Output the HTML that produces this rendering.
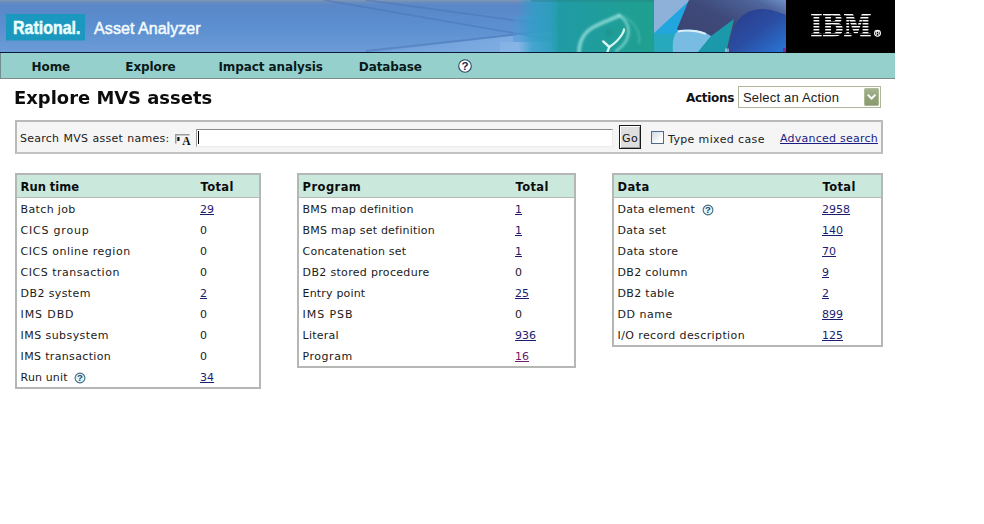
<!DOCTYPE html>
<html>
<head>
<meta charset="utf-8">
<title>Rational Asset Analyzer - Explore MVS assets</title>
<style>
html,body{margin:0;padding:0;background:#fff;}
body{width:984px;height:524px;position:relative;overflow:hidden;font-family:"DejaVu Sans","Liberation Sans",sans-serif;font-size:11px;color:#111;}
#page{position:absolute;left:0;top:0;width:895px;height:524px;}
#banner{position:absolute;left:0;top:0;width:895px;height:53px;display:block;}
#nav{position:absolute;left:0;top:53px;width:895px;height:26px;background:#96d0cc;border-bottom:1px solid #7f8a8a;border-left:1px solid #6f8f8c;box-sizing:border-box;}
#nav span{position:absolute;top:7px;font-weight:bold;font-size:12px;letter-spacing:-0.1px;color:#0a1a1a;white-space:nowrap;line-height:14px;}
h1{position:absolute;left:14px;top:87px;margin:0;font-size:17px;letter-spacing:0;transform-origin:0 0;transform:scaleX(1.055);font-weight:bold;line-height:22px;color:#0c0c0c;white-space:nowrap;}
#actlbl{position:absolute;left:686px;top:91px;font-weight:bold;font-size:12px;letter-spacing:-0.3px;line-height:14px;color:#111;}
#sel{position:absolute;left:738px;top:86px;width:141px;height:20px;border:1px solid #adb79b;background:#fff;}
#sel .t{position:absolute;left:4px;top:3px;font-family:"Liberation Sans",sans-serif;font-size:13px;letter-spacing:0.18px;line-height:16px;color:#222;white-space:nowrap;}
#sel .b{position:absolute;left:125px;top:1px;width:15px;height:18px;}
#search{position:absolute;left:15px;top:120px;width:864px;height:30px;border:2px solid #b9b9b9;border-bottom-color:#c2c2c2;background:#f5f5f5;}
#search .lbl{position:absolute;left:3px;top:10px;line-height:14px;letter-spacing:0.26px;word-spacing:0.4px;white-space:nowrap;color:#222;}
#inp{position:absolute;left:179px;top:7px;width:415px;height:16px;background:#fff;border:1px solid #ececec;border-top:1px solid #8a8a8a;border-left:1px solid #9a9a9a;}
#go{position:absolute;left:602px;top:3px;width:20px;height:22px;border:1px solid #1a1a1a;background:#dedede;box-shadow:inset 1px 1px 0 #fff, inset -1px -1px 0 #9a9a9a;}
#go span{position:absolute;left:2px;top:6px;line-height:14px;font-size:11px;letter-spacing:0.6px;color:#111;}
#cb{position:absolute;left:634px;top:9px;width:11px;height:11px;border:1px solid #4d6a8c;background:linear-gradient(135deg,#cfd8e2,#ffffff 75%);}
#tmc{position:absolute;left:651px;top:11px;line-height:14px;letter-spacing:0.37px;white-space:nowrap;color:#222;}
#adv{position:absolute;left:763px;top:10px;line-height:14px;letter-spacing:0.24px;white-space:nowrap;color:#1c1c84;text-decoration:underline;}
.tb{position:absolute;top:173px;border:2px solid #b4b7b4;background:#fff;}
.tb .hd{height:22px;background:#cbe8dd;border-bottom:1px solid #b4b7b4;position:relative;font-weight:bold;font-size:11.5px;}
.tb .r{height:21px;position:relative;}
.tb .hd span,.tb .r span{position:absolute;white-space:nowrap;line-height:14px;}
.tb .hd span{top:5.4px;color:#0c0c0c;}
.tb .r span{top:5px;color:#1a1a1a;}
.tb span.a{left:3.6px;}
.tb .r span.lk{color:#1c1c70;text-decoration:underline;}
.tb .r span.vs{color:#6a206a;text-decoration:underline;}
.tb .hd span.tt{letter-spacing:0.35px;}
.q{position:absolute;top:5.6px;}
</style>
</head>
<body>
<div id="page">
<svg id="banner" width="895" height="53" viewBox="0 0 895 53">
  <defs>
    <linearGradient id="bg" x1="0" y1="0" x2="0" y2="1">
      <stop offset="0" stop-color="#8196b4"/>
      <stop offset="0.045" stop-color="#688bbf"/>
      <stop offset="0.1" stop-color="#5a87c8"/>
      <stop offset="0.5" stop-color="#5b8fd0"/>
      <stop offset="1" stop-color="#6d9cd7"/>
    </linearGradient>
    <linearGradient id="fade" gradientUnits="userSpaceOnUse" x1="366" y1="0" x2="560" y2="0">
      <stop offset="0" stop-color="#8cb8ea" stop-opacity="0.15"/>
      <stop offset="1" stop-color="#8cb8ea" stop-opacity="0.75"/>
    </linearGradient>
    <linearGradient id="tl0" x1="0" y1="0" x2="1" y2="0">
      <stop offset="0" stop-color="#2f9fc8" stop-opacity="0"/>
      <stop offset="0.35" stop-color="#2f9fc6" stop-opacity="0.75"/>
      <stop offset="0.8" stop-color="#2a9fbc" stop-opacity="0.9"/>
      <stop offset="1" stop-color="#239da8"/>
    </linearGradient>
    <linearGradient id="tl" x1="0" y1="0" x2="1" y2="0">
      <stop offset="0" stop-color="#209ba6"/>
      <stop offset="1" stop-color="#1fa08f"/>
    </linearGradient>
    <linearGradient id="cy" x1="0" y1="0" x2="0" y2="1">
      <stop offset="0" stop-color="#20a4e4"/>
      <stop offset="0.6" stop-color="#22a6dc"/>
      <stop offset="1" stop-color="#27a9bc"/>
    </linearGradient>
    <linearGradient id="nv" x1="0" y1="1" x2="1" y2="0">
      <stop offset="0" stop-color="#3a426e"/>
      <stop offset="0.55" stop-color="#3e4a7a"/>
      <stop offset="0.85" stop-color="#4e659c"/>
      <stop offset="1" stop-color="#6e90c8"/>
    </linearGradient>
    <linearGradient id="arc" x1="0" y1="0" x2="1" y2="1">
      <stop offset="0" stop-color="#2b3a88"/>
      <stop offset="0.5" stop-color="#2c4ea4"/>
      <stop offset="1" stop-color="#2a7cdc"/>
    </linearGradient>
  <filter id="bl" x="-10%" y="-10%" width="120%" height="120%"><feGaussianBlur stdDeviation="0.9"/></filter>
    <filter id="bl2" x="-10%" y="-10%" width="120%" height="120%"><feGaussianBlur stdDeviation="0.6"/></filter>
  </defs>
  <rect x="0" y="0" width="895" height="53" fill="url(#bg)"/>
  <path d="M366,53 L560,30 L560,53 Z" fill="url(#fade)"/>
  <g stroke="#4a74b6" stroke-width="1.8" fill="none" opacity="0.5">
    <path d="M324,0 L560,41"/>
    <path d="M366,0 L560,26.5"/>
    <path d="M366,51 L560,29.5"/>
  </g>
  <rect x="513" y="16" width="45" height="26" fill="#4a98d4" opacity="0.5"/>
  <rect x="500" y="42" width="58" height="10" fill="#9cc8ee" opacity="0.3"/>
  <rect x="518" y="0" width="40" height="53" fill="url(#tl0)"/>
  <rect x="558" y="0" width="96" height="53" fill="url(#tl)"/>
  <rect x="531" y="0" width="123" height="2" fill="#23787c" opacity="0.3"/>
  <g fill="none" stroke-linecap="round" filter="url(#bl)">
    <path d="M579,53 C579,42 584,33 592,28 C601,22.5 612,19.5 619,15.5" stroke="#b4f2ec" stroke-width="3.8" opacity="0.62"/>
    <path d="M619,15.5 C626,19 630,28 628,36 C626.5,42 622,47 616,51" stroke="#b4f2ec" stroke-width="2.6" opacity="0.55"/>
    <path d="M621,15 C633,20 641,31 639,43" stroke="#8fe2d8" stroke-width="1.8" opacity="0.32"/>
    <circle cx="609" cy="33" r="4" fill="#178a86" stroke="none" opacity="0.35"/>
  </g>
  <g fill="none" stroke-linecap="round" filter="url(#bl2)">
    <path d="M603.2,41.4 L609.3,47" stroke="#eafffc" stroke-width="2.4" opacity="0.92"/>
    <path d="M607,53 L609.3,47 C614,44 619,39.5 622.3,34 C623.5,32 624,30.5 624,29.3" stroke="#eafffc" stroke-width="2.3" opacity="0.88"/>
  </g>
  <g>
    <rect x="654" y="0" width="132" height="53" fill="#8db1d9"/>
    <path d="M690,0 L654,33 L654,53 L676,53 L678,28 Z" fill="url(#cy)"/>
    <path d="M654,34 L676,34 L676,53 L654,53 Z" fill="#28a9b8" opacity="0.75"/>
    <path d="M689,0 L786,0 L786,53 L700,53 L677,29 Q684,12 689,0 Z" fill="url(#nv)"/>
    <g filter="url(#bl2)">
    <path d="M729,54 C729,40 732,27 740,18 C747,11 756,8.5 764,9 C774,10 782,13 790,17 L790,54 Z" fill="url(#arc)"/>
    </g>
    <path d="M673,53 C672,40 674,32 680,30 C690,28 703,31 711,36 L728,53 Z" fill="#78bce4"/>
    <path d="M678,31.5 C686,29.8 696,30.5 706,33.8" stroke="#eef8fd" stroke-width="1.9" fill="none" opacity="0.85" filter="url(#bl2)"/>
    <path d="M697,53 L711,36 L734,19 L726,53 Z" fill="#1b98aa"/>
    <rect x="725" y="48.5" width="4" height="3.5" fill="#cfe8f6" opacity="0.55"/>
    <rect x="783" y="48" width="3" height="4" fill="#7a2a9a"/>
  </g>
  <rect x="786" y="0" width="109" height="53" fill="#000"/>
  <g>
    <text x="841" y="36.3" text-anchor="middle" font-family="'DejaVu Serif','Liberation Serif',serif" font-weight="bold" font-size="31" textLength="61" lengthAdjust="spacingAndGlyphs" fill="#fff" stroke="#fff" stroke-width="1.1" opacity="0.99">IBM</text>
    <g fill="#000">
      <rect x="805" y="15.5" width="72" height="1.5"/>
      <rect x="805" y="18.5" width="72" height="1.5"/>
      <rect x="805" y="21.5" width="72" height="1.5"/>
      <rect x="805" y="24.5" width="72" height="1.5"/>
      <rect x="805" y="27.5" width="72" height="1.5"/>
      <rect x="805" y="30.5" width="72" height="1.5"/>
      <rect x="805" y="33.5" width="72" height="1.5"/>
      <rect x="805" y="36.5" width="72" height="4"/>
      <rect x="805" y="8" width="72" height="6"/>
    </g>
    <circle cx="877.5" cy="33.3" r="2.9" fill="none" stroke="#fff" stroke-width="1.15"/>
    <text x="877.6" y="35.1" text-anchor="middle" font-family="'Liberation Sans',sans-serif" font-weight="bold" font-size="5" fill="#fff" opacity="0.99">R</text>
  </g>
  <rect x="0" y="52" width="786" height="1" fill="#0c1a34"/>
  <rect x="6" y="14" width="79" height="26.5" fill="#1a98c0"/>
  <text x="13.1" y="34" font-family="'Liberation Sans',sans-serif" font-weight="bold" font-size="18.2" textLength="67.4" lengthAdjust="spacingAndGlyphs" fill="#e8ffff" stroke="#e8ffff" stroke-width="0.5">Rational.</text>
  <text x="94.1" y="33.6" font-family="'Liberation Sans',sans-serif" font-size="17.2" textLength="106.5" lengthAdjust="spacingAndGlyphs" fill="#f4fbff" stroke="#f4fbff" stroke-width="0.5">Asset Analyzer</text>
</svg>
<div id="nav">
  <span style="left:30.6px">Home</span>
  <span style="left:124.3px">Explore</span>
  <span style="left:217.5px">Impact analysis</span>
  <span style="left:357.8px">Database</span>
  <svg style="position:absolute;left:456px;top:5px" width="16" height="16" viewBox="0 0 16 16"><circle cx="8" cy="8" r="6.3" fill="#fff" stroke="#2a4463" stroke-width="1.1"/><text x="8" y="12.1" text-anchor="middle" font-family="'Liberation Sans',sans-serif" font-weight="bold" font-size="11.5" fill="#1a2a4a">?</text></svg>
</div>
<h1>Explore MVS assets</h1>
<div id="actlbl">Actions</div>
<div id="sel"><span class="t">Select an Action</span>
  <svg class="b" viewBox="0 0 15 18"><defs><linearGradient id="sb" x1="0" y1="0" x2="0" y2="1"><stop offset="0" stop-color="#a6b38e"/><stop offset="0.5" stop-color="#93a379"/><stop offset="1" stop-color="#8a9b6f"/></linearGradient></defs><rect x="0" y="0" width="15" height="18" rx="1.5" fill="#b4c0a0"/><rect x="0.8" y="0.8" width="13.4" height="16.4" rx="1" fill="url(#sb)"/><path d="M3.8,6.6 L7.6,10.6 L11.4,6.6" fill="none" stroke="#fff" stroke-width="2.1"/></svg>
</div>
<div id="search">
  <span class="lbl">Search MVS asset names:</span>
  <svg style="position:absolute;left:158px;top:12px" width="17" height="13" viewBox="0 0 17 13"><path d="M0.75,9.5 L0.75,0.75 L14.5,0.75" fill="none" stroke="#9c9c9c" stroke-width="1.5"/><rect x="2.3" y="3" width="2.2" height="4" fill="#111"/><text x="11.3" y="10.5" text-anchor="middle" font-family="'Liberation Serif',serif" font-weight="bold" font-size="11.5" fill="#111">A</text></svg>
  <div id="inp"><div style="position:absolute;left:1px;top:1px;width:1px;height:13px;background:#000"></div></div>
  <div id="go"><span>Go</span></div>
  <div id="cb"></div>
  <span id="tmc">Type mixed case</span>
  <span id="adv">Advanced search</span>
</div>

<div class="tb" style="left:15px;width:242px;">
  <div class="hd"><span class="a" style="letter-spacing:0.0px">Run time</span><span class="tt" style="left:183.6px">Total</span></div>
  <div class="r"><span class="a" style="letter-spacing:0.353px">Batch job</span><span class="lk" style="left:183px">29</span></div>
  <div class="r"><span class="a" style="letter-spacing:0.781px">CICS group</span><span style="left:183px">0</span></div>
  <div class="r"><span class="a" style="letter-spacing:0.507px">CICS online region</span><span style="left:183px">0</span></div>
  <div class="r"><span class="a" style="letter-spacing:0.505px">CICS transaction</span><span style="left:183px">0</span></div>
  <div class="r"><span class="a" style="letter-spacing:0.394px">DB2 system</span><span class="lk" style="left:183px">2</span></div>
  <div class="r"><span class="a" style="letter-spacing:0.871px">IMS DBD</span><span style="left:183px">0</span></div>
  <div class="r"><span class="a" style="letter-spacing:0.431px">IMS subsystem</span><span style="left:183px">0</span></div>
  <div class="r"><span class="a" style="letter-spacing:0.346px">IMS transaction</span><span style="left:183px">0</span></div>
  <div class="r"><span class="a" style="letter-spacing:0.143px">Run unit</span><svg class="q" style="left:57.35px" width="12" height="12" viewBox="0 0 12 12"><circle cx="6" cy="6" r="4.9" fill="#e2f5fa" stroke="#44687a" stroke-width="1.1"/><text x="6" y="9.3" text-anchor="middle" font-family="'Liberation Sans',sans-serif" font-weight="bold" font-size="9.5" fill="#1d466c">?</text></svg><span class="lk" style="left:183px">34</span></div>
</div>

<div class="tb" style="left:297px;width:275px;">
  <div class="hd"><span class="a" style="letter-spacing:0.43px">Program</span><span class="tt" style="left:216.6px">Total</span></div>
  <div class="r"><span class="a" style="letter-spacing:0.216px">BMS map definition</span><span class="lk" style="left:216px">1</span></div>
  <div class="r"><span class="a" style="letter-spacing:0.214px">BMS map set definition</span><span class="lk" style="left:216px">1</span></div>
  <div class="r"><span class="a" style="letter-spacing:0.188px">Concatenation set</span><span class="lk" style="left:216px">1</span></div>
  <div class="r"><span class="a" style="letter-spacing:0.322px">DB2 stored procedure</span><span style="left:216px">0</span></div>
  <div class="r"><span class="a" style="letter-spacing:0.173px">Entry point</span><span class="lk" style="left:216px">25</span></div>
  <div class="r"><span class="a" style="letter-spacing:0.917px">IMS PSB</span><span style="left:216px">0</span></div>
  <div class="r"><span class="a" style="letter-spacing:0.238px">Literal</span><span class="lk" style="left:216px">936</span></div>
  <div class="r"><span class="a" style="letter-spacing:0.521px">Program</span><span class="vs" style="left:216px">16</span></div>
</div>

<div class="tb" style="left:612px;width:267px;">
  <div class="hd"><span class="a" style="letter-spacing:0.33px">Data</span><span class="tt" style="left:208.6px">Total</span></div>
  <div class="r"><span class="a" style="letter-spacing:0.186px">Data element</span><svg class="q" style="left:87.60px" width="12" height="12" viewBox="0 0 12 12"><circle cx="6" cy="6" r="4.9" fill="#e2f5fa" stroke="#44687a" stroke-width="1.1"/><text x="6" y="9.3" text-anchor="middle" font-family="'Liberation Sans',sans-serif" font-weight="bold" font-size="9.5" fill="#1d466c">?</text></svg><span class="lk" style="left:208px">2958</span></div>
  <div class="r"><span class="a" style="letter-spacing:0.268px">Data set</span><span class="lk" style="left:208px">140</span></div>
  <div class="r"><span class="a" style="letter-spacing:0.325px">Data store</span><span class="lk" style="left:208px">70</span></div>
  <div class="r"><span class="a" style="letter-spacing:0.311px">DB2 column</span><span class="lk" style="left:208px">9</span></div>
  <div class="r"><span class="a" style="letter-spacing:0.297px">DB2 table</span><span class="lk" style="left:208px">2</span></div>
  <div class="r"><span class="a" style="letter-spacing:0.487px">DD name</span><span class="lk" style="left:208px">899</span></div>
  <div class="r"><span class="a" style="letter-spacing:0.387px">I/O record description</span><span class="lk" style="left:208px">125</span></div>
</div>
</div>
</body>
</html>
